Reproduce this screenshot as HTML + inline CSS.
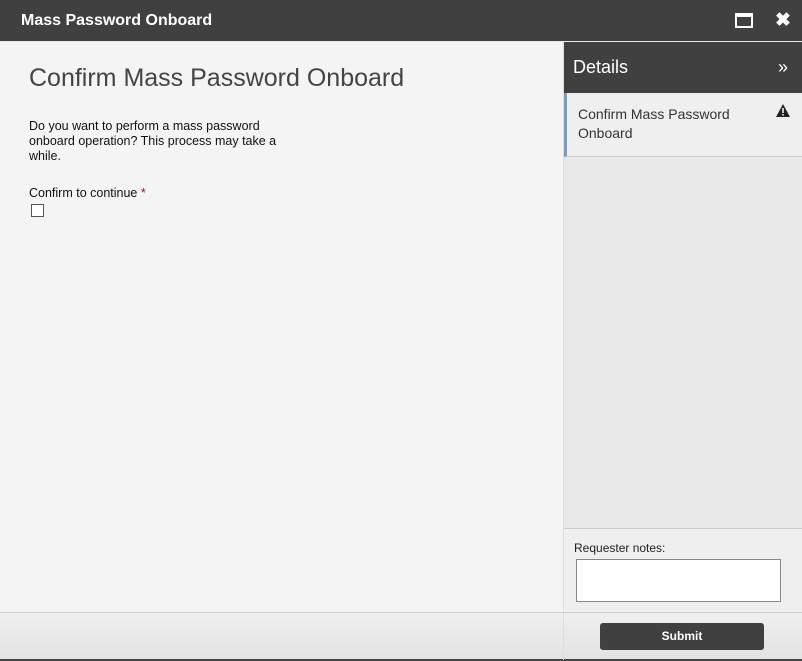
<!DOCTYPE html>
<html><head><style>
*{margin:0;padding:0;box-sizing:border-box}
body{width:802px;height:661px;overflow:hidden;font-family:"Liberation Sans",sans-serif;background:#f4f4f4;position:relative;color:#222}
.tb{position:absolute;left:0;top:0;width:802px;height:42px;background:#404040;color:#fff;font-weight:bold;font-size:16px;line-height:41px;padding-left:21px;border-bottom:1px solid #e8e8e8}
.main{position:absolute;left:0;top:42px;width:563px;height:570px;background:#f4f4f4}
h1{position:absolute;left:29px;top:64px;font-weight:normal;font-size:25px;color:#444}
.p{position:absolute;left:29px;top:119px;font-size:12.5px;line-height:15px;width:300px;color:#111}
.lab{position:absolute;left:29px;top:186px;font-size:12.5px;color:#111}
.cb{position:absolute;left:31px;top:204px;width:13px;height:13px;border:1px solid #555;background:#fff}
.side{position:absolute;left:563px;top:42px;width:239px;height:570px;background:#e8e8e8;border-left:1px solid #ddd}
.sh{height:51px;background:#404040;color:#fff;font-size:18px;line-height:51px;padding-left:9px;position:relative}
.item{height:64px;background:#efefef;border-left:3px solid #7f9bb8;border-bottom:1px solid #ccc;padding:12px 0 0 11px;font-size:14px;line-height:19px;color:#333;position:relative}
.notes{position:absolute;left:0;top:486px;width:239px;height:84px;background:#efefef;border-top:1px solid #ccc}
.notes span{position:absolute;left:10px;top:12px;font-size:12px;color:#222}
.ta{position:absolute;left:12px;top:30px;width:205px;height:43px;background:#fff;border:1px solid #888}
.foot{position:absolute;left:0;top:612px;width:802px;height:49px;background:linear-gradient(#efefef,#e3e3e3);border-top:1px solid #ccc;border-bottom:2px solid #444}
.btn{position:absolute;left:600px;top:10px;width:164px;height:27px;background:#404040;border-radius:3px;color:#fff;font-weight:bold;font-size:12px;text-align:center;line-height:27px}
.sep{position:absolute;left:563px;top:0;width:1px;height:47px;background:#ddd}
</style></head><body>
<div class="tb">Mass Password Onboard
<div style="position:absolute;left:735px;top:13px;width:18px;height:15px;border:2px solid #fff;border-top-width:4px"></div>
<div style="position:absolute;left:775px;top:0;font-size:19px">✖</div>
</div>
<div class="main"></div>
<h1>Confirm Mass Password Onboard</h1>
<div class="p">Do you want to perform a mass password<br>onboard operation? This process may take a<br>while.</div>
<div class="lab">Confirm to continue <span style="color:#c00">*</span></div>
<div class="cb"></div>
<div class="side">
<div class="sh">Details<span style="position:absolute;right:14px;top:0;font-size:18px">»</span></div>
<div class="item">Confirm Mass Password<br>Onboard
<svg style="position:absolute;right:12px;top:11px" width="14" height="13" viewBox="0 0 14 13"><path d="M7 0L14 13H0Z" fill="#222"/><rect x="6.2" y="4" width="1.6" height="5" fill="#efefef"/><rect x="6.2" y="10" width="1.6" height="1.6" fill="#efefef"/></svg></div>
<div class="notes"><span>Requester notes:</span><div class="ta"></div></div>
</div>
<div class="foot"><div class="sep"></div><div class="btn">Submit</div></div>
</body></html>
